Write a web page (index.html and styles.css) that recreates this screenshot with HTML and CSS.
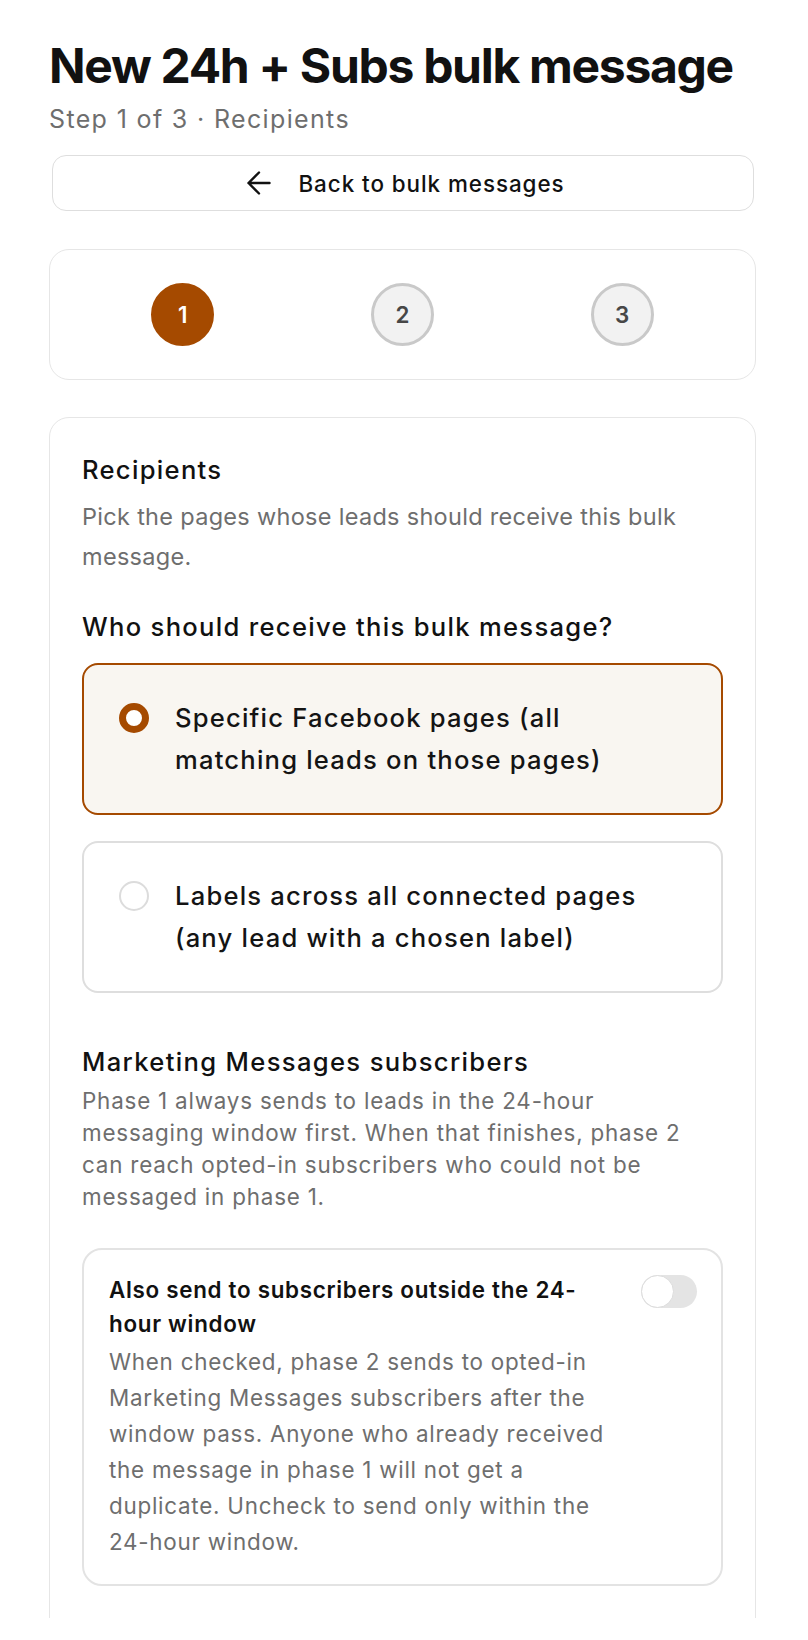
FILE: index.html
```html
<!DOCTYPE html>
<html lang="en">
<head>
<meta charset="utf-8">
<title>New 24h + Subs bulk message</title>
<link rel="stylesheet" href="styles.css">
</head>
<body>
<div class="page">
  <h1 class="title">New 24h + Subs bulk message</h1>
  <p class="subtitle">Step 1 of 3 · Recipients</p>
  <button class="back-btn" type="button">
    <svg class="back-icon" viewBox="0 0 24 24" width="36" height="36" aria-hidden="true">
      <path d="M12 19l-7-7 7-7M19 12H5" fill="none" stroke="currentColor" stroke-width="1.6" stroke-linecap="round" stroke-linejoin="round"/>
    </svg>
    <span>Back to bulk messages</span>
  </button>

  <div class="card steps">
    <div class="step"><span class="step-dot active">1</span></div>
    <div class="step"><span class="step-dot">2</span></div>
    <div class="step"><span class="step-dot">3</span></div>
  </div>

  <section class="card main">
    <h2 class="section-title">Recipients</h2>
    <p class="section-desc">Pick the pages whose leads should receive this bulk message.</p>

    <h3 class="question">Who should receive this bulk message?</h3>
    <div class="options">
      <label class="option selected">
        <span class="radio"></span>
        <span class="option-text">Specific Facebook pages (all matching leads on those pages)</span>
      </label>
      <label class="option">
        <span class="radio"></span>
        <span class="option-text">Labels across all connected pages (any lead with a chosen label)</span>
      </label>
    </div>

    <h3 class="sub-title">Marketing Messages subscribers</h3>
    <p class="sub-desc">Phase 1 always sends to leads in the 24-hour messaging window first. When that finishes, phase 2 can reach opted-in subscribers who could not be messaged in phase 1.</p>

    <div class="toggle-card">
      <div class="toggle-text">
        <div class="toggle-title">Also send to subscribers outside the 24-hour window</div>
        <p class="toggle-desc">When checked, phase 2 sends to opted-in Marketing Messages subscribers after the window pass. Anyone who already received the message in phase 1 will not get a duplicate. Uncheck to send only within the 24-hour window.</p>
      </div>
      <span class="switch"><span class="knob"></span></span>
    </div>
  </section>
</div>
</body>
</html>
```

FILE: styles.css
```css
* { box-sizing: border-box; }

html, body {
  margin: 0;
  padding: 0;
  background: #ffffff;
}

body {
  font-family: Inter, "Noto Sans", "Liberation Sans", sans-serif;
  color: #111111;
}

.page {
  height: 1618px;
  overflow: hidden;
  padding: 37px 52px 0 49px;
}

.title {
  margin: 0;
  font-size: 48px;
  line-height: 58px;
  font-weight: 700;
  letter-spacing: -1.3px;
  color: #111111;
}

.subtitle {
  margin: 8px 0 0;
  font-size: 25px;
  line-height: 32px;
  letter-spacing: 1.35px;
  color: #6e6e6e;
}

.back-btn {
  display: flex;
  align-items: center;
  justify-content: center;
  gap: 21px;
  width: calc(100% - 5px);
  height: 56px;
  margin: 20px 2px 0 3px;
  padding: 0;
  border: 1.5px solid #dedede;
  border-radius: 14px;
  background: #ffffff;
  font-family: inherit;
  font-size: 22.4px;
  font-weight: 500;
  letter-spacing: 0.95px;
  color: #111111;
}

.back-icon {
  display: block;
  flex: none;
}

.card {
  border: 1.5px solid #e6e6e6;
  border-radius: 20px;
  background: #ffffff;
}

.steps {
  display: grid;
  grid-template-columns: repeat(3, 1fr);
  justify-items: center;
  margin-top: 38px;
  padding: 33px 23px;
}

.step-dot {
  display: flex;
  align-items: center;
  justify-content: center;
  width: 63px;
  height: 63px;
  border-radius: 50%;
  border: 3px solid #c9c9c9;
  background: #f2f2f2;
  font-size: 22.4px;
  font-weight: 600;
  color: #474747;
}

.step-dot.active {
  border-color: #a54a00;
  background: #a54a00;
  color: #ffffff;
}

.main {
  margin-top: 37px;
  padding: 35px 32px 60px;
  min-height: 1400px;
}

.section-title {
  margin: 0;
  font-size: 25.6px;
  line-height: 34px;
  font-weight: 500;
  letter-spacing: 1.3px;
}

.section-desc {
  margin: 10px 0 0;
  font-size: 23.5px;
  line-height: 40px;
  letter-spacing: 0.3px;
  color: #6e6e6e;
}

.question {
  margin: 33px 0 0;
  font-size: 25.6px;
  line-height: 34px;
  font-weight: 500;
  letter-spacing: 1.3px;
}

.options {
  display: flex;
  flex-direction: column;
  gap: 26px;
  margin-top: 19px;
}

.option {
  display: flex;
  align-items: flex-start;
  gap: 26px;
  padding: 32px 72px 32px 35px;
  border: 2.5px solid #dedede;
  border-radius: 16px;
  background: #ffffff;
}

.option.selected {
  border-color: #a54a00;
  background: #f9f6f1;
}

.radio {
  flex: none;
  width: 30px;
  height: 30px;
  margin-top: 6px;
  border-radius: 50%;
  border: 2px solid #dcdcdc;
  background: #ffffff;
}

.option.selected .radio {
  border: 7px solid #a54a00;
}

.option-text {
  font-size: 25.6px;
  line-height: 42px;
  font-weight: 500;
  letter-spacing: 1.2px;
  color: #141414;
}

.sub-title {
  margin: 52px 0 0;
  font-size: 25.6px;
  line-height: 34px;
  font-weight: 500;
  letter-spacing: 1.34px;
}

.sub-desc {
  max-width: 608px;
  margin: 6px 0 0;
  font-size: 22.4px;
  line-height: 32px;
  letter-spacing: 0.8px;
  color: #6e6e6e;
}

.toggle-card {
  display: flex;
  align-items: flex-start;
  gap: 24px;
  margin-top: 35px;
  padding: 23px 24px 24px 25px;
  border: 2px solid #e3e3e3;
  border-radius: 20px;
}

.toggle-text {
  flex: 1;
  min-width: 0;
}

.toggle-title {
  font-size: 22.4px;
  line-height: 34px;
  font-weight: 600;
  letter-spacing: 0.7px;
  color: #111111;
}

.toggle-desc {
  margin: 3px 0 0;
  font-size: 22.4px;
  line-height: 36px;
  letter-spacing: 0.75px;
  color: #6e6e6e;
}

.switch {
  position: relative;
  flex: none;
  width: 56px;
  height: 33px;
  margin-top: 2px;
  border-radius: 17px;
  background: #e4e4e4;
}

.knob {
  position: absolute;
  left: 0;
  top: 0;
  width: 33px;
  height: 33px;
  border-radius: 50%;
  background: #ffffff;
  border: 1.5px solid #dcdcdc;
}
```
